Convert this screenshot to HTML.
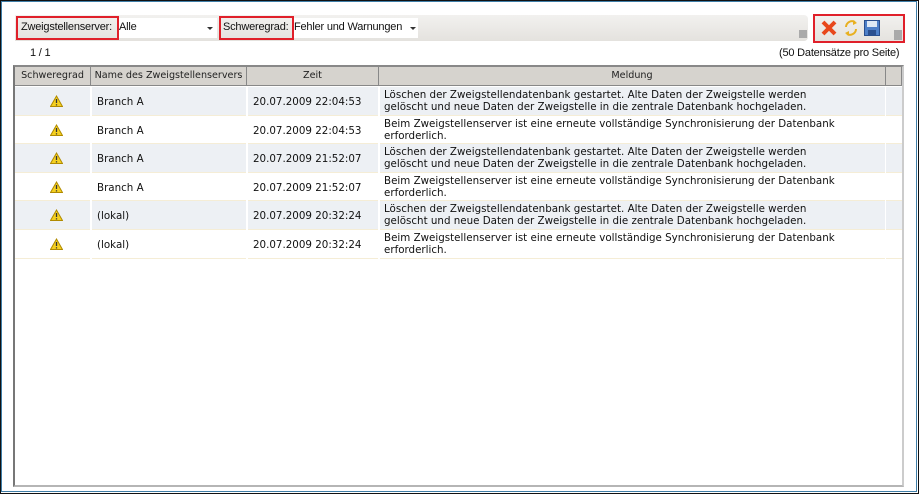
<!DOCTYPE html>
<html><head><meta charset="utf-8"><style>
*{margin:0;padding:0;box-sizing:border-box}
body{width:919px;height:494px;position:relative;background:#fff;font-family:"DejaVu Sans","Liberation Sans",sans-serif;font-size:10px;color:#111;overflow:hidden}
.a{position:absolute}
.lb{font-family:"Liberation Sans",sans-serif;font-size:11px;letter-spacing:-0.2px}
.frame{left:0;top:0;width:919px;height:494px;border:1px solid #111}
.blue{left:1px;top:1px;width:916px;height:491px;border:1px solid #3f7ea8}
.bar{left:15px;top:15px;width:793px;height:26px;background:linear-gradient(#f2f1ef,#e4e2de);border-radius:0 4px 4px 0}
.red{border:2px solid #e0202a}
.sel{background:#fff}
.arrow{width:0;height:0;border-left:3px solid transparent;border-right:3px solid transparent;border-top:3px solid #333}
.grid{left:13px;top:65px;width:891px;height:422px;border-left:2px solid #777;border-top:2px solid #888;border-right:2px solid #ccc;border-bottom:2px solid #b5b5b5}
.hd{top:67px;height:19px;background:#d6d3ce;border-right:1px solid #888;border-bottom:1px solid #888;text-align:center;line-height:18px;font-size:9.6px;color:#222}
.row{left:15px;width:887px;height:28.6px;border-bottom:1px solid #f5edd6}
.c{position:absolute;line-height:12px}
.w{position:absolute;left:50px}
</style></head><body>
<div class="a frame"></div>
<div class="a blue"></div>
<div class="a bar"></div>
<div class="a sel" style="left:117px;top:18px;width:100px;height:20px"></div>
<div class="a arrow" style="left:207px;top:27px"></div>
<div class="a red" style="left:16px;top:16px;width:103px;height:24px"></div>
<div class="a lb" style="left:21px;top:21px">Zweigstellenserver:</div>
<div class="a lb" style="left:119px;top:21px">Alle</div>
<div class="a sel" style="left:292px;top:18px;width:126px;height:20px"></div>
<div class="a arrow" style="left:410px;top:27px"></div>
<div class="a red" style="left:219px;top:16px;width:75px;height:24px"></div>
<div class="a lb" style="left:223px;top:21px">Schweregrad:</div>
<div class="a lb" style="left:294px;top:21px">Fehler und Warnungen</div>
<div class="a" style="left:799px;top:30px;width:8px;height:8px;background:#aaa"></div>
<div class="a" style="left:813px;top:15px;width:92px;height:27px;background:linear-gradient(#f2f1ef,#e4e2de)"></div>
<div class="a" style="left:894px;top:30px;width:8px;height:10px;background:#aaa"></div>
<div class="a red" style="left:813px;top:14px;width:92px;height:29px"></div>
<svg class="a" style="left:821px;top:20px" width="16" height="16"><path d="M2 2L14 14M14 2L2 14" stroke="#e8481c" stroke-width="4"/></svg>
<svg class="a" style="left:843px;top:19px" width="16" height="18"><path d="M12 3 A6 6 0 0 0 3 8" stroke="#e8b020" stroke-width="2" fill="none"/><path d="M10 1L14 4L10 6Z" fill="#e8b020"/><path d="M4 15 A6 6 0 0 0 13 10" stroke="#e8b020" stroke-width="2" fill="none"/><path d="M6 17L2 14L6 12Z" fill="#e8b020"/></svg>
<svg class="a" style="left:864px;top:20px" width="16" height="16"><rect x="0.5" y="0.5" width="15" height="15" fill="#4d7fc8" stroke="#2a4f8f"/><rect x="3" y="1" width="10" height="6" fill="#dde8f5"/><rect x="4" y="10" width="8" height="5" fill="#2a4f8f"/></svg>
<div class="a lb" style="left:30px;top:47px">1 / 1</div>
<div class="a lb" style="left:779px;top:47px">(50 Datensätze pro Seite)</div>
<div class="a grid"></div>
<div class="a hd" style="left:15px;width:76px">Schweregrad</div>
<div class="a hd" style="left:91px;width:156px">Name des Zweigstellenservers</div>
<div class="a hd" style="left:247px;width:132px">Zeit</div>
<div class="a hd" style="left:379px;width:507px">Meldung</div>
<div class="a hd" style="left:886px;width:16px"></div>

<div class="a row" style="top:87px;background:#edf0f4"></div>
<div class="a row" style="top:115.6px;background:#fff"></div>
<div class="a row" style="top:144.2px;background:#edf0f4"></div>
<div class="a row" style="top:172.8px;background:#fff"></div>
<div class="a row" style="top:201.4px;background:#edf0f4"></div>
<div class="a row" style="top:230px;background:#fff"></div>
<div class="a" style="left:90px;top:87px;width:2px;height:172px;background:#fff"></div>
<div class="a" style="left:246px;top:87px;width:2px;height:172px;background:#fff"></div>
<div class="a" style="left:378px;top:87px;width:2px;height:172px;background:#fff"></div>
<div class="a" style="left:885px;top:87px;width:1px;height:172px;background:#fff"></div>

<div class="a" style="left:0;top:87px;width:919px;font-size:10.3px">
<svg class="w" style="top:8px" width="13" height="12"><path d="M6.5 1L12.5 11.5H0.5Z" fill="#f5d020" stroke="#b08a00"/><path d="M6.5 4V8M6.5 9.3V10.5" stroke="#333" stroke-width="1.3"/></svg>
<div class="c" style="left:97px;top:9px">Branch A</div><div class="c" style="left:253px;top:9px">20.07.2009 22:04:53</div><div class="c" style="left:384px;top:2px">Löschen der Zweigstellendatenbank gestartet. Alte Daten der Zweigstelle werden<br>gelöscht und neue Daten der Zweigstelle in die zentrale Datenbank hochgeladen.</div>
<svg class="w" style="top:37px" width="13" height="12"><path d="M6.5 1L12.5 11.5H0.5Z" fill="#f5d020" stroke="#b08a00"/><path d="M6.5 4V8M6.5 9.3V10.5" stroke="#333" stroke-width="1.3"/></svg>
<div class="c" style="left:97px;top:38px">Branch A</div><div class="c" style="left:253px;top:38px">20.07.2009 22:04:53</div><div class="c" style="left:384px;top:31px">Beim Zweigstellenserver ist eine erneute vollständige Synchronisierung der Datenbank<br>erforderlich.</div>
<svg class="w" style="top:65px" width="13" height="12"><path d="M6.5 1L12.5 11.5H0.5Z" fill="#f5d020" stroke="#b08a00"/><path d="M6.5 4V8M6.5 9.3V10.5" stroke="#333" stroke-width="1.3"/></svg>
<div class="c" style="left:97px;top:66px">Branch A</div><div class="c" style="left:253px;top:66px">20.07.2009 21:52:07</div><div class="c" style="left:384px;top:59px">Löschen der Zweigstellendatenbank gestartet. Alte Daten der Zweigstelle werden<br>gelöscht und neue Daten der Zweigstelle in die zentrale Datenbank hochgeladen.</div>
<svg class="w" style="top:94px" width="13" height="12"><path d="M6.5 1L12.5 11.5H0.5Z" fill="#f5d020" stroke="#b08a00"/><path d="M6.5 4V8M6.5 9.3V10.5" stroke="#333" stroke-width="1.3"/></svg>
<div class="c" style="left:97px;top:95px">Branch A</div><div class="c" style="left:253px;top:95px">20.07.2009 21:52:07</div><div class="c" style="left:384px;top:88px">Beim Zweigstellenserver ist eine erneute vollständige Synchronisierung der Datenbank<br>erforderlich.</div>
<svg class="w" style="top:122px" width="13" height="12"><path d="M6.5 1L12.5 11.5H0.5Z" fill="#f5d020" stroke="#b08a00"/><path d="M6.5 4V8M6.5 9.3V10.5" stroke="#333" stroke-width="1.3"/></svg>
<div class="c" style="left:97px;top:123px">(lokal)</div><div class="c" style="left:253px;top:123px">20.07.2009 20:32:24</div><div class="c" style="left:384px;top:116px">Löschen der Zweigstellendatenbank gestartet. Alte Daten der Zweigstelle werden<br>gelöscht und neue Daten der Zweigstelle in die zentrale Datenbank hochgeladen.</div>
<svg class="w" style="top:151px" width="13" height="12"><path d="M6.5 1L12.5 11.5H0.5Z" fill="#f5d020" stroke="#b08a00"/><path d="M6.5 4V8M6.5 9.3V10.5" stroke="#333" stroke-width="1.3"/></svg>
<div class="c" style="left:97px;top:152px">(lokal)</div><div class="c" style="left:253px;top:152px">20.07.2009 20:32:24</div><div class="c" style="left:384px;top:145px">Beim Zweigstellenserver ist eine erneute vollständige Synchronisierung der Datenbank<br>erforderlich.</div>
</div>
</body></html>
